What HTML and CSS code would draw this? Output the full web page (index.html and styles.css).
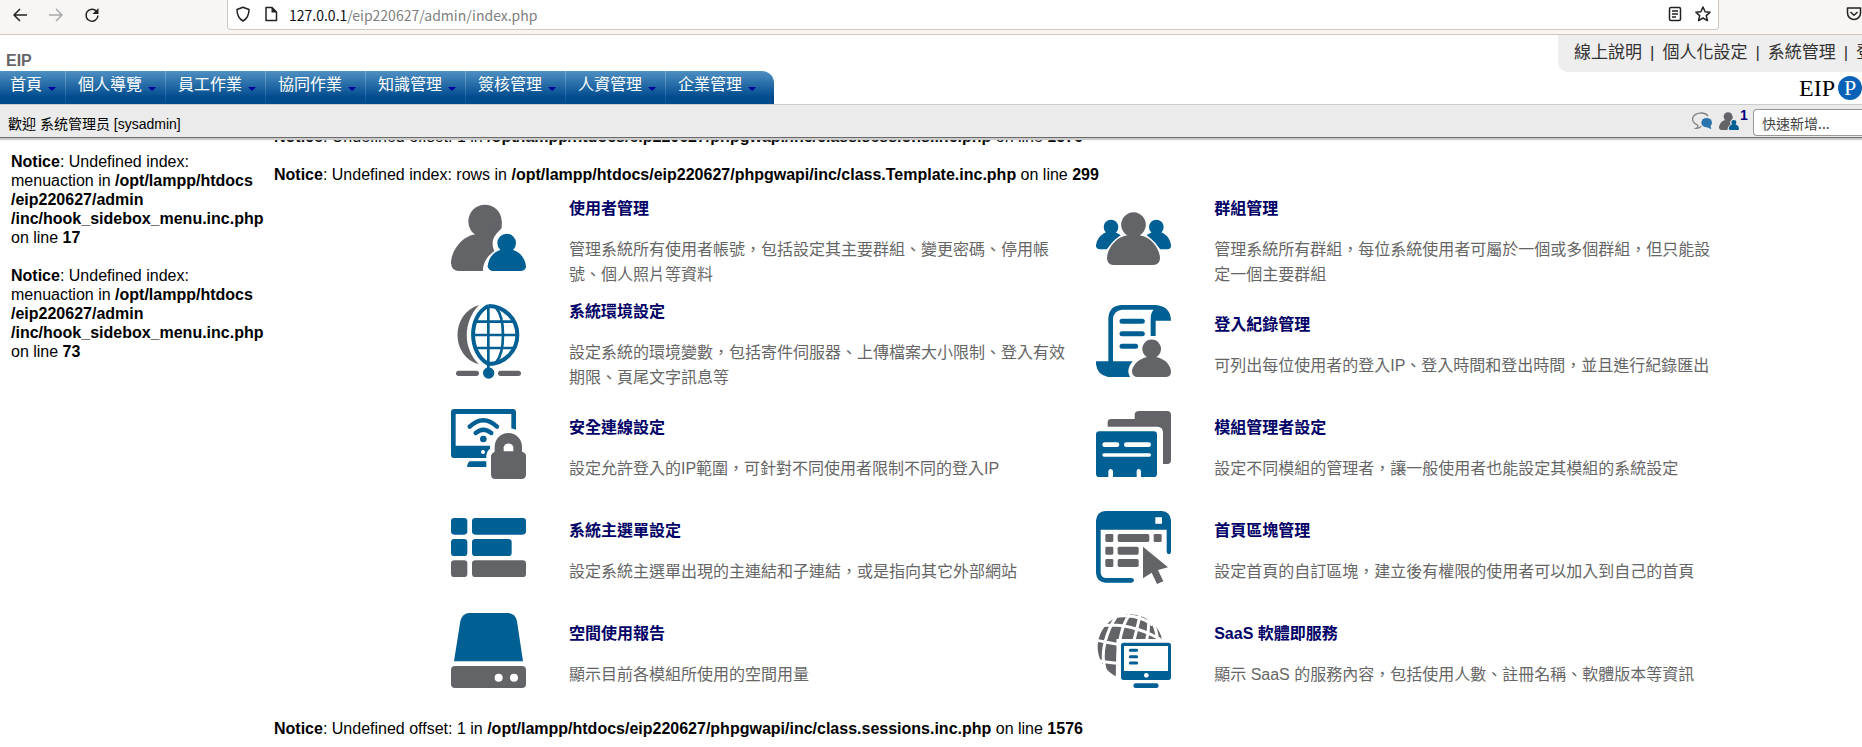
FILE: index.html
```html
<!DOCTYPE html>
<html lang="zh-Hant">
<head>
<meta charset="utf-8">
<title>EIP</title>
<link rel="stylesheet" href="styles.css">
</head>
<body>
<div class="browser-bar">
  <div class="browser-nav">
    <button class="tool" aria-label="Back"><svg width="16" height="16" viewBox="0 0 16 16"><path d="M15 8H2M8 2L2 8l6 6" class="line"/></svg></button>
    <button class="tool tool-off" aria-label="Forward"><svg width="16" height="16" viewBox="0 0 16 16"><path d="M1 8h13M8 2l6 6-6 6" class="line"/></svg></button>
    <button class="tool" aria-label="Reload"><svg width="16" height="16" viewBox="0 0 16 16"><path d="M12.500 4.200A6 6 0 1 0 14 8.500" class="line"/><path d="M14.500 1v6h-6z"/></svg></button>
  </div>
  <div class="url-box">
    <svg width="16" height="16" viewBox="0 0 16 16"><path d="M8 1.200L14 3.500C14 9 12.500 12.500 8 15C3.500 12.500 2 9 2 3.500z" class="line"/></svg>
    <svg width="16" height="16" viewBox="0 0 16 16"><path d="M3 1.500h6l4.500 4.500v8.500h-10.500z" class="line"/><path d="M8.500 1v5.500H14z"/></svg>
    <span class="url"><b class="url-host">127.0.0.1</b>/eip220627/admin/index.php</span>
    <button class="tool" aria-label="Reader view"><svg width="16" height="16" viewBox="0 0 16 16"><rect x="2.500" y="1.500" width="11" height="13" rx="1.500" class="line"/><path d="M5 5h6M5 8h6M5 11h4" class="line"/></svg></button>
    <button class="tool" aria-label="Bookmark"><svg width="16" height="16" viewBox="0 0 16 16"><path d="M8 1l2.100 4.700 5 .5-3.800 3.400 1.100 5L8 12l-4.400 2.600 1.100-5L.9 6.200l5-.5z" class="line"/></svg></button>
  </div>
  <button class="tool pocket" aria-label="Pocket"><svg width="16" height="16" viewBox="0 0 16 16"><path d="M1.500 2h13v5a6.500 6.500 0 0 1-13 0z" class="line"/><path d="M4.500 6L8 9.200 11.500 6" class="line"/></svg></button>
</div>

<header class="page-header">
  <div class="header-top">
    <div class="header-left">
      <div class="site-name">EIP</div>
      <nav class="main-nav">
        <a href="#">首頁</a><a href="#">個人導覽</a><a href="#">員工作業</a><a href="#">協同作業</a><a href="#">知識管理</a><a href="#">簽核管理</a><a href="#">人資管理</a><a href="#">企業管理</a>
      </nav>
    </div>
    <div class="header-right">
      <div class="user-links"><a href="#">線上說明</a><i>|</i><a href="#">個人化設定</a><i>|</i><a href="#">系統管理</a><i>|</i><a href="#">登出</a></div>
      <div class="brand">EIP<span class="brand-mark">P</span></div>
    </div>
  </div>
  <div class="status-bar">
    <div class="welcome">歡迎 系统管理员 [sysadmin]</div>
    <div class="status-tools">
      <svg width="20" height="18" viewBox="0 0 60 54"><path d="M48 12C38 -1 10 0 3 16C-1 27 8 35 15 38C20 42 18 46 12 49C20 50 25 47 28 42" fill="none" stroke="#808080" stroke-width="4"/><ellipse cx="44" cy="32" rx="16" ry="14" fill="#2b73ad"/><path d="M42 44l16 8-3-14z" fill="#2b73ad"/></svg>
      <svg width="20" height="18" viewBox="30 28 225 200"><use href="#user-pair"/></svg>
      <sup class="badge">1</sup>
      <select class="quick-add" aria-label="快速新增"><option>快速新增...</option></select>
    </div>
  </div>
</header>

<div class="page-body">
  <aside class="sidebar">
    <p><b>Notice</b>: Undefined index: menuaction in <b>/opt/lampp/htdocs<wbr>/eip220627/admin<wbr>/inc/hook_sidebox_menu.inc.php</b> on line <b>17</b></p>
    <p><b>Notice</b>: Undefined index: menuaction in <b>/opt/lampp/htdocs<wbr>/eip220627/admin<wbr>/inc/hook_sidebox_menu.inc.php</b> on line <b>73</b></p>
  </aside>
  <main class="content">
    <p><b>Notice</b>: Undefined offset: 1 in <b>/opt/lampp/htdocs/eip220627/phpgwapi/inc/class.sessions.inc.php</b> on line <b>1576</b></p>
    <p><b>Notice</b>: Undefined index: rows in <b>/opt/lampp/htdocs/eip220627/phpgwapi/inc/class.Template.inc.php</b> on line <b>299</b></p>
    <div class="modules">
      <section class="module">
        <svg class="icon" viewBox="30 18 225 225"><g id="user-pair"><circle cx="132" cy="79" r="50" class="gray"/><path d="M103 118C62 124 30 168 30 205Q32 228 54 228H150L190 150L160 112z" class="gray"/><path d="M126 234C124 204 138 184 160 168C150 146 154 120 180 106L240 106V234z" class="halo"/><path d="M155 134Q160 120 182 100L182 79H155z" class="gray"/><circle cx="197" cy="144" r="28" class="blue"/><path d="M179 164C156 172 143 188 140 214Q142 228 158 228H240Q255 227 255 214C252 188 237 172 216 164z" class="blue"/></g></svg>
        <div><h2><a href="#">使用者管理</a></h2><p>管理系統所有使用者帳號，包括設定其主要群組、變更密碼、停用帳號、個人照片等資料</p></div>
      </section>
      <section class="module">
        <svg class="icon" viewBox="30 18 225 225"><g class="blue"><circle cx="75" cy="96" r="22"/><path d="M60 112C40 120 30 140 30 154Q32 163 42 163H62L104 120Q95 115 88 112z"/><circle cx="211" cy="96" r="22"/><path d="M226 112C246 120 255 140 255 154Q254 163 244 163H223L182 120Q191 115 198 112z"/></g><path d="M124 121C90 126 63 162 63 190Q64 210 82 210H202Q221 210 222 190C222 162 195 126 161 121A37 37 0 1 0 124 121z" class="gray" stroke="#fff" stroke-width="10" paint-order="stroke"/></svg>
        <div><h2><a href="#">群組管理</a></h2><p>管理系統所有群組，每位系統使用者可屬於一個或多個群組，但只能設定一個主要群組</p></div>
      </section>
      <section class="module">
        <svg class="icon" viewBox="30 327 225 225"><path d="M114 330C28 356 28 484 114 508C65 460 65 382 114 330z" class="gray"/><g fill="none" stroke="#005f93" stroke-width="8"><path d="M142 333C81 362 81 474 142 507M142 333A87 87 0 0 1 142 507" stroke-width="12"/><path d="M142 333V522M165 338C193 370 193 470 165 503M104 380H222M97 420H230M104 459H222"/></g><circle cx="143" cy="534" r="17" class="blue"/><g class="gray"><rect x="45" y="527" width="69" height="16" rx="8"/><rect x="171" y="527" width="69" height="16" rx="8"/></g></svg>
        <div><h2><a href="#">系統環境設定</a></h2><p>設定系統的環境變數，包括寄件伺服器、上傳檔案大小限制、登入有效期限、頁尾文字訊息等</p></div>
      </section>
      <section class="module">
        <svg class="icon" viewBox="30 327 225 225"><path d="M30 499H67V370Q69 333 105 330H208C240 332 255 350 255 377H209V423H194V368Q195 352 203 344H108Q82 347 81 373V499H140L138 546H66Q34 540 30 508z" class="blue"/><g stroke="#005f93" stroke-width="15" stroke-linecap="round"><path d="M108 379H169M108 416H169M108 454H149"/></g><path d="M183 486C155 492 138 514 138 530Q140 546 155 546H241Q255 544 255 530C255 514 240 492 211 486A28 28 0 1 0 183 486z" class="gray" stroke="#fff" stroke-width="22" paint-order="stroke"/></svg>
        <div><h2><a href="#">登入紀錄管理</a></h2><p>可列出每位使用者的登入IP、登入時間和登出時間，並且進行紀錄匯出</p></div>
      </section>
      <section class="module">
        <svg class="icon" viewBox="30 636 225 225"><path fill-rule="evenodd" d="M40 642H215Q225 642 225 652V705H211V657H44V752H150V789H40Q30 789 30 779V652Q30 642 40 642z" class="blue"/><path d="M86 799H140V816H78Q80 802 86 799z" class="blue"/><g fill="none" stroke="#005f93" stroke-width="13" stroke-linecap="round"><path d="M86 695Q127 656 168 695M104 714Q127 694 151 714"/></g><circle cx="127" cy="732" r="10" class="blue"/><circle cx="126" cy="771" r="6" fill="#fff"/><path fill-rule="evenodd" d="M161 770V755A41 41 0 0 1 243 755V770Q255 774 255 782V840Q253 852 242 852H163Q151 852 150 840V782Q151 774 161 770z" class="gray" stroke="#fff" stroke-width="28" paint-order="stroke"/><path d="M188 769V757A15 15 0 0 1 217 757V769z" fill="#fff"/></svg>
        <div><h2><a href="#">安全連線設定</a></h2><p>設定允許登入的IP範圍，可針對不同使用者限制不同的登入IP</p></div>
      </section>
      <section class="module">
        <svg class="icon" viewBox="30 636 225 225"><path d="M65 695V682Q65 672 76 672H146V658Q148 648 159 648H243Q255 648 255 660V795Q255 807 244 807H231V711Q230 696 215 695z" class="gray"/><path d="M40 709H203Q213 709 213 719V836Q213 846 203 846H165V829Q164 822 158 822T152 829V846H81V829Q80 822 74 822T67 829V846H40Q30 846 30 836V719Q30 709 40 709z" class="blue"/><g stroke="#fff" stroke-linecap="round"><path d="M56 749H93M121 749H188" stroke-width="14"/><path d="M54 780H190" stroke-width="10"/></g></svg>
        <div><h2><a href="#">模組管理者設定</a></h2><p>設定不同模組的管理者，讓一般使用者也能設定其模組的系統設定</p></div>
      </section>
      <section class="module">
        <svg class="icon" viewBox="30 945 225 225"><g class="blue"><rect x="30" y="969" width="49" height="50" rx="10"/><rect x="93" y="969" width="162" height="50" rx="10"/><rect x="30" y="1032" width="49" height="51" rx="10"/><rect x="93" y="1032" width="119" height="51" rx="10"/></g><g class="gray"><rect x="30" y="1096" width="49" height="50" rx="10"/><rect x="93" y="1096" width="162" height="50" rx="10"/></g></svg>
        <div><h2><a href="#">系統主選單設定</a></h2><p>設定系統主選單出現的主連結和子連結，或是指向其它外部網站</p></div>
      </section>
      <section class="module">
        <svg class="icon" viewBox="30 945 225 225"><path fill-rule="evenodd" d="M58 948H227Q253 950 255 976V1071Q254 1078 249 1078T242 1071V1004H44V1134Q46 1147 58 1149H137Q144 1150 144 1156T137 1163H58Q32 1161 30 1134V976Q32 950 58 948zM208 967V986H228V967z" class="blue"/><g class="gray"><rect x="58" y="1017" width="24" height="24" rx="4"/><rect x="95" y="1017" width="95" height="24" rx="5"/><rect x="203" y="1017" width="24" height="24" rx="4"/><rect x="58" y="1055" width="24" height="24" rx="4"/><rect x="95" y="1055" width="63" height="24" rx="5"/><rect x="58" y="1092" width="24" height="24" rx="4"/><rect x="95" y="1092" width="63" height="24" rx="5"/><path d="M171 1055L246 1117L216 1125L232 1159L213 1167L197 1133L171 1150z"/></g></svg>
        <div><h2><a href="#">首頁區塊管理</a></h2><p>設定首頁的自訂區塊，建立後有權限的使用者可以加入到自己的首頁</p></div>
      </section>
      <section class="module">
        <svg class="icon" viewBox="30 1254 225 225"><path d="M39 1399L58 1279Q63 1256 83 1254H203Q224 1257 228 1279L246 1399z" class="blue"/><rect x="30" y="1413" width="225" height="66" rx="12" class="gray"/><circle cx="173" cy="1448" r="12" fill="#fff"/><circle cx="219" cy="1448" r="12" fill="#fff"/></svg>
        <div><h2><a href="#">空間使用報告</a></h2><p>顯示目前各模組所使用的空間用量</p></div>
      </section>
      <section class="module">
        <svg class="icon" viewBox="30 1254 225 225"><path d="M92 1445A98 98 0 1 1 228 1332H92z" class="gray"/><g fill="none" stroke="#fff" stroke-width="9"><path d="M50 1291C110 1285 170 1300 235 1340M25 1335C60 1340 100 1350 130 1355M25 1393C50 1402 75 1403 105 1406M85 1265C120 1258 165 1262 200 1290M100 1255C68 1290 50 1350 52 1390C54 1420 62 1440 70 1450M132 1258C105 1290 93 1350 94 1450M162 1258C157 1290 147 1320 142 1345M188 1262C190 1290 186 1320 180 1345M196 1275C209 1295 214 1320 216 1345"/></g><rect x="92" y="1332" width="171" height="133" fill="#fff"/><path fill-rule="evenodd" d="M113 1343H247Q255 1343 255 1351V1447Q255 1455 247 1455H113Q105 1455 105 1447V1351Q105 1343 113 1343zM114 1353V1428H246V1353z" class="blue"/><circle cx="181" cy="1441" r="7" fill="#fff"/><g stroke="#005f93" stroke-linecap="round"><path d="M133 1366H152M133 1385H152M133 1404H152" stroke-width="9"/><path d="M149 1472H211" stroke-width="14"/></g></svg>
        <div><h2><a href="#">SaaS 軟體即服務</a></h2><p>顯示 SaaS 的服務內容，包括使用人數、註冊名稱、軟體版本等資訊</p></div>
      </section>
    </div>
    <p><b>Notice</b>: Undefined offset: 1 in <b>/opt/lampp/htdocs/eip220627/phpgwapi/inc/class.sessions.inc.php</b> on line <b>1576</b></p>
  </main>
</div>
</body>
</html>
```

FILE: styles.css
```css
* { box-sizing: border-box; }
html, body { overflow: hidden; }
body {
  margin: 0;
  background: #fff;
  color: #000;
  font: 16px/19px "Liberation Sans", "Noto Sans CJK TC", sans-serif;
}
a { color: inherit; text-decoration: none; }
svg { display: block; flex: none; }
.line { fill: none; stroke: currentColor; stroke-width: 1.5; stroke-linejoin: round; }
.gray { fill: #636468; }
.blue { fill: #005f93; }
.halo { fill: var(--halo, #fff); }

.browser-bar {
  display: flex;
  height: 35px;
  background: #f7f6f5;
  border-bottom: 1px solid #cec8c0;
  color: #222;
}
.browser-nav {
  display: flex;
  gap: 20px;
  width: 227px;
  padding: 7px 12px 0;
}
.tool {
  width: 16px;
  height: 16px;
  padding: 0;
  border: 0;
  background: none;
  color: inherit;
}
.tool svg, .url-box svg { fill: currentColor; }
.tool-off { color: #a9a9a9; }
.url-box {
  display: flex;
  flex: 1;
  gap: 12px;
  height: 30px;
  padding: 6px 7px 0;
  background: #fff;
  border: 1px solid #cec8c0;
  border-top: 0;
  border-radius: 0 0 4px 4px;
}
.url {
  flex: 1;
  margin-left: -2px;
  font: 14px/18px "Noto Sans CJK SC", sans-serif;
  color: #808080;
}
.url-host { font-weight: 400; color: #111; }
.pocket { margin: 6px 0 0 127px; flex: none; }

.page-header { position: relative; z-index: 1; background: #fff; }
.header-top { display: flex; justify-content: space-between; height: 69px; }
.header-left { display: flex; flex-direction: column; justify-content: flex-end; }
.site-name { padding: 0 6px; font-weight: 700; line-height: 21px; color: #666; }
.main-nav {
  display: flex;
  height: 33px;
  background: linear-gradient(#4f90c3, #004b8e 80%);
  border-radius: 0 12px 0 0;
  color: #fff;
  overflow: hidden;
}
.main-nav a {
  display: flex;
  gap: 6px;
  padding: 0 9px 0 12px;
  border-right: 1px solid;
  border-image: linear-gradient(#7fb2da, #004b8e) 1;
  line-height: 27px;
}
.main-nav a:first-child { padding-left: 10px; }
.main-nav a:last-child { padding-right: 18px; border: 0; }
.main-nav a::after {
  content: "";
  margin-top: 16px;
  width: 8px;
  height: 4px;
  background: #00009c;
  clip-path: polygon(0 0, 100% 0, 50% 100%);
}
.header-right {
  display: flex;
  flex-direction: column;
  align-items: flex-end;
  width: 304px;
}
.user-links {
  display: flex;
  gap: 8px;
  width: 100%;
  height: 37px;
  padding-left: 16px;
  background: #eee;
  border-radius: 0 0 0 10px;
  font-size: 17px;
  line-height: 35px;
  color: #333;
  white-space: nowrap;
  overflow: hidden;
}
.user-links i { font-style: normal; }
.brand {
  display: flex;
  align-items: center;
  gap: 3px;
  height: 32px;
  font: 24px "Liberation Serif", serif;
}
.brand-mark {
  width: 24px;
  height: 24px;
  border-radius: 50%;
  background: #0a62b8;
  color: #fff;
  font-size: 22px;
  line-height: 24px;
  text-align: center;
}
.status-bar {
  --halo: #ebebeb;
  display: flex;
  justify-content: space-between;
  height: 34px;
  padding-left: 8px;
  background: #ebebeb;
  border-top: 1px solid #ccc;
  border-bottom: 1px solid #6b6b6b;
  box-shadow: 0 2px 1px #ccc;
}
.welcome { font-size: 14px; line-height: 38px; }
.status-tools { display: flex; align-items: flex-start; gap: 7px; padding-top: 4px; }
.status-tools svg { margin-top: 3px; }
.badge { width: 6px; margin-left: -6px; font-size: 14px; font-weight: 700; line-height: 12px; color: #000080; }
.quick-add {
  width: 109px;
  height: 27px;
  padding: 0 8px;
  appearance: none;
  background: #fff;
  border: 1px solid #999;
  border-right: 0;
  border-radius: 4px 0 0 4px;
  color: #444;
  font: 14px "Noto Sans CJK TC", sans-serif;
}

.page-body { display: flex; margin-top: -11px; }
.page-body p { margin: 0 0 19px; }
.sidebar { width: 274px; flex: none; padding: 25px 8px 0 11px; }
.content { flex: 1; }
.content > p:nth-of-type(2) { margin-bottom: 5px; }
.modules {
  display: grid;
  grid-template-columns: 1fr 1fr;
  column-gap: 20px;
  width: 80%;
  margin: 0 0 15px 177px;
}
.module {
  display: grid;
  grid-template-columns: 75px 1fr;
  column-gap: 43px;
  align-items: center;
  min-height: 103px;
  line-height: 25px;
}
.icon { width: 75px; height: 75px; margin-bottom: 4px; }
.module h2 { margin: 2px 0 16px; font-size: 16px; line-height: 25px; color: #006; }
.page-body .module p { margin: 0; color: #666; }
```
